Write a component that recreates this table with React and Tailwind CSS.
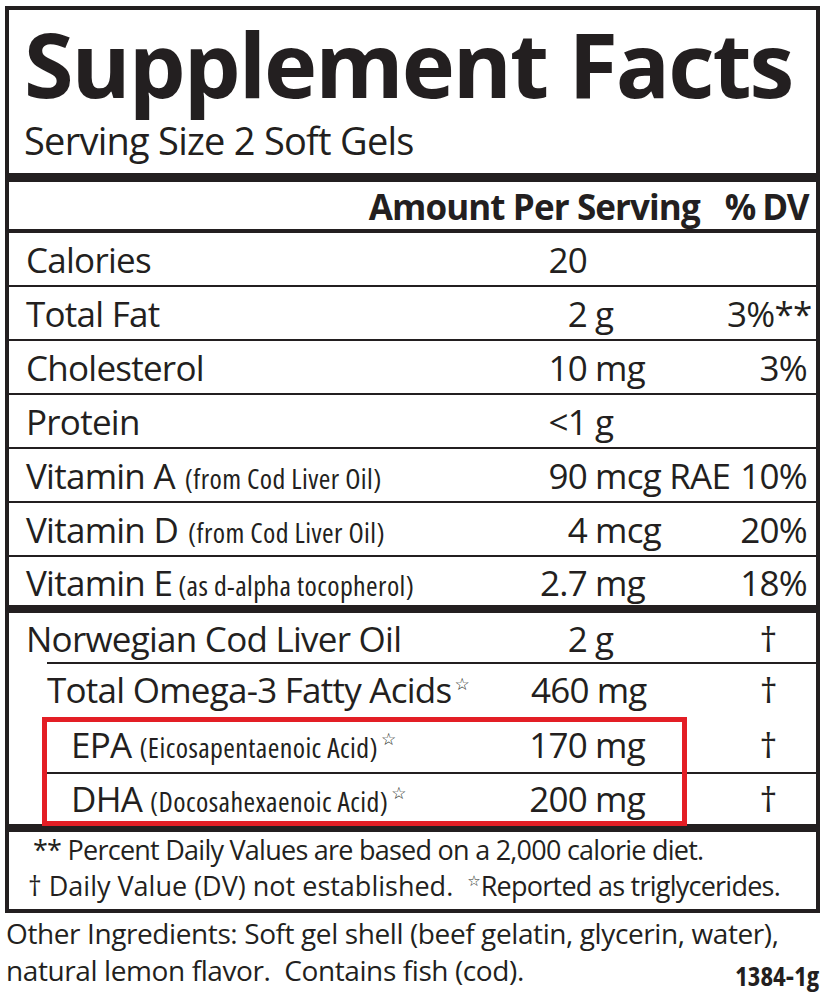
const ink = "text-[#231f20]";

const Star = () => (
  <span className="relative -top-[13px] ml-[3px] text-[17px] leading-none tracking-normal font-['DejaVu_Sans'] text-[#231f20]">☆</span>
);

const Sub = ({ children, gap = "ml-[10px]" }) => (
  <span className={`${gap} text-[28px] font-stretch-condensed tracking-[0.4px]`}>{children}</span>
);

const rows = [
  { label: "Calories", num: "20", unit: "", dv: "" },
  { label: "Total Fat", num: "2", unit: "g", dv: "3%**" },
  { label: "Cholesterol", num: "10", unit: "mg", dv: "3%" },
  { label: "Protein", num: "<1", unit: "g", dv: "" },
  { label: "Vitamin A", sub: "(from Cod Liver Oil)", num: "90", unit: "mcg RAE", dv: "10%" },
  { label: "Vitamin D", sub: "(from Cod Liver Oil)", num: "4", unit: "mcg", dv: "20%" },
];

const Cols = ({ num, unit, dv, dagger }) => (
  <>
    <span className="w-[120px] text-right">{num}</span>
    <span className="w-[140px] pl-[8px] whitespace-nowrap">{unit}</span>
    <span className={dagger ? "w-[80px] text-center pl-[2px]" : "w-[80px] text-right whitespace-nowrap"}>{dv}</span>
  </>
);

export default function App() {
  return (
    <div className={`w-[828px] h-[995px] bg-white ${ink} font-['Open_Sans',sans-serif] tracking-[-0.75px] pt-[6px]`}>
      <div className="ml-[5px] w-[815px] border-[4px] border-[#231f20]">
        {/* title */}
        <div className="pl-[15px] pt-[8px] pb-[14px]">
          <h1 className="text-[90px] leading-none font-bold tracking-[-2px] whitespace-nowrap">Supplement Facts</h1>
          <p className="mt-[13px] text-[38px] leading-none">Serving Size 2 Soft Gels</p>
        </div>
        <div className="h-[9px] bg-[#231f20]" />

        <div className="h-[47px] pt-[7px] pr-[8px] flex justify-end text-[35px] leading-none font-bold">
          <span className="tracking-[-0.9px]">Amount Per Serving</span>
          <span className="ml-[25px] tracking-[-2px]">%</span>
          <span className="ml-[8px] tracking-[-1.5px]">DV</span>
        </div>
        <div className="h-[4px] bg-[#231f20]" />

        <div className="text-[35px] leading-none">
          {rows.map((r) => (
            <div key={r.label} className="h-[54px] pt-[9px] pl-[17px] pr-[9px] flex items-baseline border-b-2 border-[#231f20]">
              <span className="flex-1 whitespace-nowrap">
                {r.label}
                {r.sub && <Sub>{r.sub}</Sub>}
              </span>
              <Cols num={r.num} unit={r.unit} dv={r.dv} />
            </div>
          ))}
          <div className="h-[48px] pt-[8px] pl-[17px] pr-[9px] flex items-baseline">
            <span className="flex-1 whitespace-nowrap">
              Vitamin E
              <Sub gap="ml-[6px]">(as d-alpha tocopherol)</Sub>
            </span>
            <Cols num="2.7" unit="mg" dv="18%" />
          </div>
          <div className="h-[8px] bg-[#231f20]" />

          <div className="h-[49px] pt-[8px] pl-[17px] pr-[9px] flex items-baseline">
            <span className="flex-1 whitespace-nowrap">Norwegian Cod Liver Oil</span>
            <Cols num="2" unit="g" dv="†" dagger />
          </div>
          <div className="ml-[38px] h-[2px] bg-[#231f20]" />
          <div className="h-[54px] pt-[8px] pl-[38px] pr-[9px] flex items-baseline">
            <span className="flex-1 whitespace-nowrap">
              Total Omega-3 Fatty Acids
              <Star />
            </span>
            <Cols num="460" unit="mg" dv="†" dagger />
          </div>

          <div className="relative">
            <div className="h-[54px] pt-[9px] pl-[62px] pr-[9px] flex items-baseline">
              <span className="flex-1 whitespace-nowrap">
                EPA
                <Sub gap="ml-[8px]">(Eicosapentaenoic Acid)</Sub>
                <Star />
              </span>
              <Cols num="170" unit="mg" dv="†" dagger />
            </div>
            <div className="ml-[38px] h-[2px] bg-[#231f20]" />
            <div className="h-[50px] pt-[7px] pl-[62px] pr-[9px] flex items-baseline">
              <span className="flex-1 whitespace-nowrap">
                DHA
                <Sub gap="ml-[8px]">(Docosahexaenoic Acid)</Sub>
                <Star />
              </span>
              <Cols num="200" unit="mg" dv="†" dagger />
            </div>
            <div className="pointer-events-none absolute top-[-1px] left-[33px] w-[645px] bottom-[-2px] border-[5px] border-[#e31e25]" />
          </div>
          <div className="h-[8px] bg-[#231f20]" />
        </div>

        <div className="text-[27px] leading-[36px]">
          <p className="pl-[24px] whitespace-nowrap">** Percent Daily Values are based on a 2,000 calorie diet.</p>
          <p className="pl-[19px] whitespace-nowrap">
            <span className="tracking-[0px]">† Daily Value (DV) not established.</span>
            <span className="ml-[14px] relative -top-[10px] text-[15px] tracking-normal font-['DejaVu_Sans']">☆</span>Reported as triglycerides.
          </p>
        </div>
      </div>

      <div className="mt-[2px] pl-[6px] pr-[9px] text-[28px] leading-[37px] tracking-[-0.4px]">
        <p className="whitespace-nowrap">Other Ingredients: Soft gel shell (beef gelatin, glycerin, water),</p>
        <div className="flex justify-between items-start">
          <p className="whitespace-nowrap">natural lemon flavor.&nbsp; Contains fish (cod).</p>
          <span className="mt-[5px] text-[27px] font-bold font-stretch-condensed tracking-normal">1384-1g</span>
        </div>
      </div>
    </div>
  );
}
